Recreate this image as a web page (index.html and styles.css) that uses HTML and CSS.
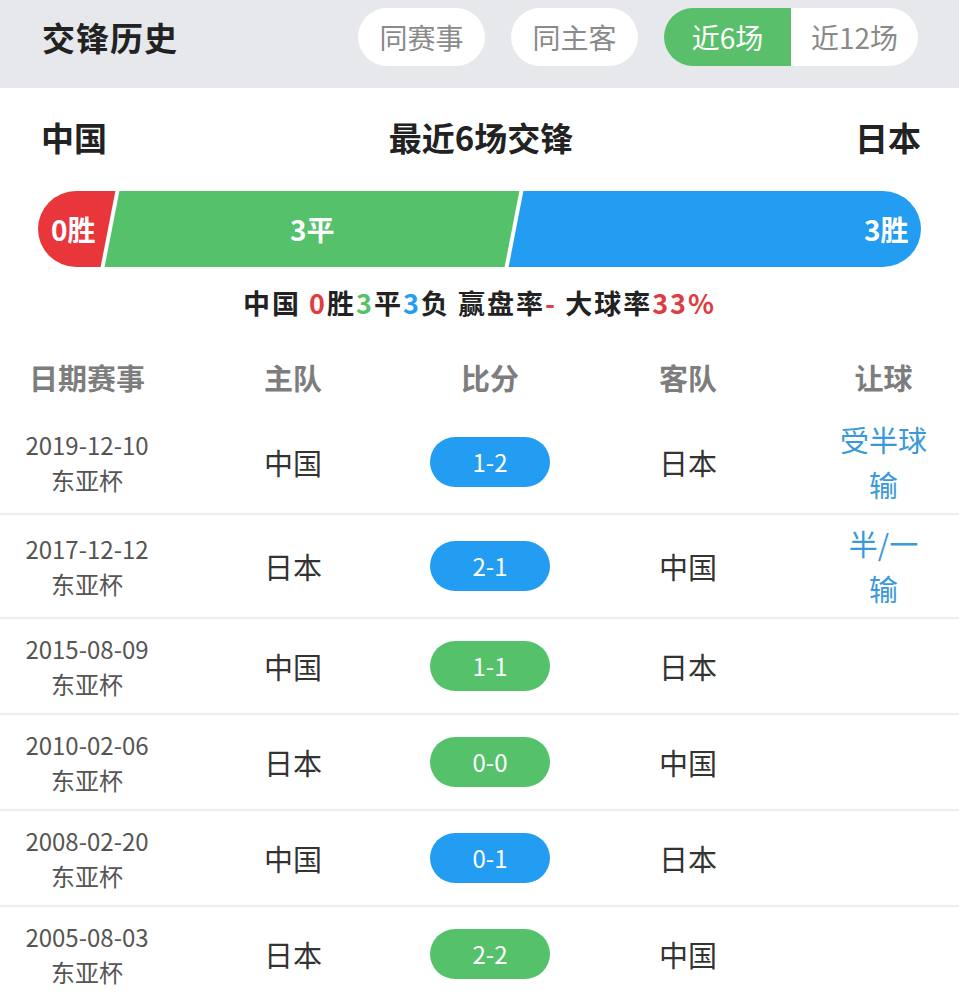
FILE: index.html
```html
<!DOCTYPE html>
<html lang="zh">
<head>
<meta charset="utf-8">
<link rel="stylesheet" href="styles.css">
</head>
<body>
<div class="header">
  <div class="title">交锋历史</div>
  <div class="filters">
    <div class="pill">同赛事</div>
    <div class="pill">同主客</div>
    <div class="seg-group">
      <div class="seg-item active">近6场</div>
      <div class="seg-item">近12场</div>
    </div>
  </div>
</div>
<div class="content">
  <div class="teams">
    <div class="team">中国</div>
    <div class="team">最近6场交锋</div>
    <div class="team">日本</div>
  </div>
  <div class="bar">
    <div class="bseg red"><span>0胜</span></div>
    <div class="bseg green"><span>3平</span></div>
    <div class="bseg blue"><span>3胜</span></div>
  </div>
  <div class="summary">中国 <span class="c-red">0</span>胜<span class="c-green">3</span>平<span class="c-blue">3</span>负 赢盘率<span class="c-red">-</span> 大球率<span class="c-red">33%</span></div>
  <div class="table">
    <div class="thead">
      <div>日期赛事</div><div>主队</div><div>比分</div><div>客队</div><div>让球</div>
    </div>
    <div class="row">
      <div class="date"><div>2019-12-10</div><div>东亚杯</div></div>
      <div class="tm">中国</div>
      <div class="sc"><span class="score s-blue">1-2</span></div>
      <div class="tm">日本</div>
      <div class="hc">受半球<br>输</div>
    </div>
    <div class="row">
      <div class="date"><div>2017-12-12</div><div>东亚杯</div></div>
      <div class="tm">日本</div>
      <div class="sc"><span class="score s-blue">2-1</span></div>
      <div class="tm">中国</div>
      <div class="hc">半/一<br>输</div>
    </div>
    <div class="row">
      <div class="date"><div>2015-08-09</div><div>东亚杯</div></div>
      <div class="tm">中国</div>
      <div class="sc"><span class="score s-green">1-1</span></div>
      <div class="tm">日本</div>
      <div class="hc"></div>
    </div>
    <div class="row">
      <div class="date"><div>2010-02-06</div><div>东亚杯</div></div>
      <div class="tm">日本</div>
      <div class="sc"><span class="score s-green">0-0</span></div>
      <div class="tm">中国</div>
      <div class="hc"></div>
    </div>
    <div class="row">
      <div class="date"><div>2008-02-20</div><div>东亚杯</div></div>
      <div class="tm">中国</div>
      <div class="sc"><span class="score s-blue">0-1</span></div>
      <div class="tm">日本</div>
      <div class="hc"></div>
    </div>
    <div class="row">
      <div class="date"><div>2005-08-03</div><div>东亚杯</div></div>
      <div class="tm">日本</div>
      <div class="sc"><span class="score s-green">2-2</span></div>
      <div class="tm">中国</div>
      <div class="hc"></div>
    </div>
  </div>
</div>
</body>
</html>
```
FILE: styles.css
```css
* { box-sizing: border-box; margin: 0; padding: 0; }
html, body { background: #ffffff; }
body {
  margin: 0;
  font-family: "Noto Sans CJK SC", "Noto Sans", sans-serif;
  color: #333;
  width: 959px;
  overflow: hidden;
}
.header {
  height: 88px;
  background: #e6e8eb;
  display: flex;
  justify-content: space-between;
  align-items: flex-start;
  padding: 8px 41px 0 42px;
}
.title {
  font-size: 33px;
  font-weight: 700;
  color: #222;
  line-height: 58px;
  letter-spacing: 1px;
}
.filters { display: flex; gap: 26px; }
.pill, .seg-item {
  width: 127px;
  height: 58px;
  line-height: 58px;
  text-align: center;
  font-size: 28px;
  color: #8a8a8a;
  background: #fff;
}
.pill { border-radius: 29px; }
.seg-group { display: flex; border-radius: 29px; overflow: hidden; }
.seg-item.active { background: #59bf6a; color: #fff; }

.teams {
  display: flex;
  justify-content: space-between;
  padding: 0 38px 0 41px;
  margin-top: 21px;
  line-height: 56px;
  font-size: 33px;
  font-weight: 700;
  color: #222;
}
.bar {
  margin: 26px 38px 0 38px;
  height: 76px;
  border-radius: 38px;
  overflow: hidden;
  display: flex;
  gap: 4px;
  background: #fff;
}
.bseg {
  transform: skewX(-11deg);
  display: flex;
  align-items: center;
  color: #fff;
  font-size: 28px;
  font-weight: 700;
}
.bseg span { transform: skewX(11deg); }
.red { background: #e8363b; width: 90px; margin-left: -20px; padding-left: 33px; }
.green { background: #55c26b; width: 400px; justify-content: center; }
.blue { background: #229df2; flex: 1; margin-right: -20px; padding-right: 32px; justify-content: flex-end; }

.summary {
  text-align: center;
  font-size: 27px;
  letter-spacing: 2px;
  font-weight: 700;
  line-height: 36px;
  margin-top: 18px;
  color: #222;
}
.c-red { color: #e23b3f; }
.c-green { color: #55c26b; }
.c-blue { color: #229df2; }

.table { margin-top: 22px; }
.thead, .row {
  display: grid;
  grid-template-columns: 174px 238px 156px 240px 151px;
  align-items: center;
  text-align: center;
}
.thead {
  height: 68px;
  font-size: 29px;
  font-weight: 700;
  color: #7d7d7d;
}
.row {
  min-height: 96px;
  padding: 6px 0;
  border-top: 2px solid #eeeeee;
}
.thead + .row { border-top: none; }
.date {
  font-size: 24px;
  line-height: 35px;
  color: #555;
}
.tm { font-size: 29px; color: #333; }
.sc { display: flex; justify-content: center; }
.score {
  display: block;
  width: 120px;
  height: 50px;
  line-height: 50px;
  border-radius: 25px;
  color: #fff;
  font-size: 24px;
}
.s-blue { background: #229df2; }
.s-green { background: #55c26b; }
.hc {
  font-size: 29px;
  line-height: 45px;
  color: #3a9ad9;
}
```
